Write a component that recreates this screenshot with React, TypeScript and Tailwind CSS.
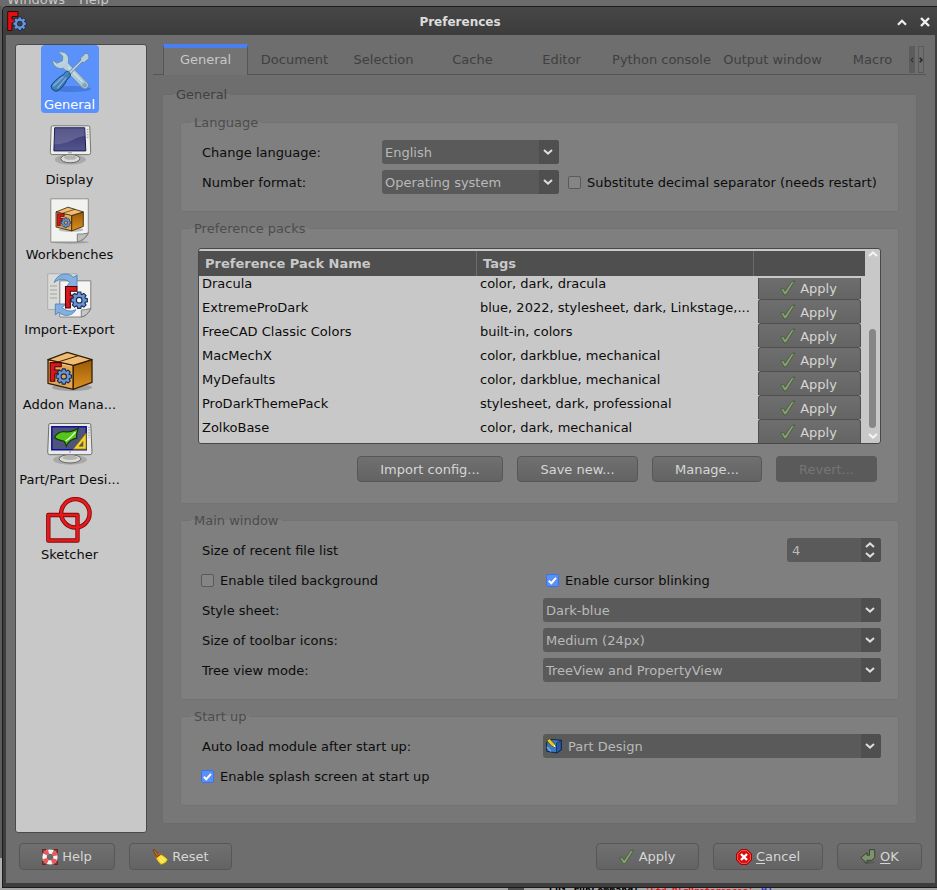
import React from "react";

const gearPath = (r: number) => {
  const pts: string[] = [];
  for (let i = 0; i < 8; i++) {
    const a = (i * Math.PI) / 4;
    [[-0.34, 0.76], [-0.19, 1], [0.19, 1], [0.34, 0.76]].forEach(([d, k]) => {
      pts.push(`${(Math.cos(a + d) * r * k).toFixed(2)},${(Math.sin(a + d) * r * k).toFixed(2)}`);
    });
  }
  return `M${pts.join("L")}Z`;
};

const Gear = ({ x, y, r, sw = 1 }: { x: number; y: number; r: number; sw?: number }) => (
  <g transform={`translate(${x} ${y})`}>
    <path
      d={`${gearPath(r)}M${r * 0.34},0A${r * 0.34},${r * 0.34} 0 1 0 ${-r * 0.34},0A${r * 0.34},${r * 0.34} 0 1 0 ${r * 0.34},0Z`}
      fill="#6a93cf"
      fillRule="evenodd"
      stroke="#142c54"
      strokeWidth={sw}
    />
  </g>
);

/* Block-shaped emblem, placed by its own corner and size. */
const Emblem = ({ x, y, w, h, sw = 1 }: { x: number; y: number; w: number; h: number; sw?: number }) => (
  <path
    transform={`translate(${x} ${y})`}
    d={`M0 0H${w}V${h * 0.22}H${w * 0.42}V${h * 0.4}H${w * 0.82}V${h * 0.6}H${w * 0.42}V${h}H0Z`}
    fill="#d8181c"
    stroke="#4a0508"
    strokeWidth={sw}
  />
);

const ToolsIcon = () => (
  <svg width="48" height="48" viewBox="0 0 48 48">
    <defs>
      <linearGradient id="wr" x1="0" y1="0" x2="1" y2="1">
        <stop offset="0" stopColor="#c3dbe4" />
        <stop offset="1" stopColor="#9fc0d2" />
      </linearGradient>
      <linearGradient id="hd" x1="0" y1="0" x2="1" y2="1">
        <stop offset="0" stopColor="#6ba6da" />
        <stop offset="1" stopColor="#1f5c9e" />
      </linearGradient>
    </defs>
    <ellipse cx="25" cy="42" rx="20" ry="3" fill="#2c5fb5" opacity=".45" />
    <path
      d="M12.5 5.2C18.5 3.6 23.3 8 22.5 13.5L22.4 16.2L41.8 36.2C43.8 38.5 41.5 42.2 38.2 41.7L36.2 40.7L17.5 21.2C11.8 22.8 6.6 18.8 6.2 12.8L10.8 16.2L16.4 13.8L16.8 9.2Z"
      fill="url(#wr)"
      stroke="#6c8fa9"
      strokeWidth="1"
    />
    <path d="M22 20L36.5 35" stroke="#d8e8ee" strokeWidth="1.4" opacity=".8" />
    <circle cx="38.6" cy="38.2" r="1.6" fill="#8cabc0" stroke="#6c8fa9" strokeWidth=".7" />
    <path d="M22 25.5L34.7 13.3L34.5 11L39.5 6.3L42.8 7L43 11.5L38.3 15.5L36 15.2L24 27.5Z" fill="#b5cddb" stroke="#5f86a5" strokeWidth=".9" />
    <path d="M20.5 24.2C22 23.6 25 26.8 24.3 28.5C23.7 30.5 21.8 31.2 20.5 33.5C19 37.5 14 43.3 10.5 44.2C8 44.2 5 41.5 5.2 39.2C6.3 36 12.5 30.5 15.5 28.8C18.5 27.5 18.7 25.4 20.5 24.2Z" fill="url(#hd)" stroke="#123f70" strokeWidth="1" />
    <path d="M8 38.5L17 30M11.5 41L20 31" stroke="#9cc6ea" strokeWidth="1.4" opacity=".65" strokeLinecap="round" />
  </svg>
);

const MonitorBase = ({ cx, cy, rx }: { cx: number; cy: number; rx: number }) => (
  <g>
    <ellipse cx={cx} cy={cy + 1} rx={rx + 6} ry="5" fill="#6f6f6f" opacity=".35" />
    <path d={`M${cx - 4} ${cy - 6}H${cx + 4}V${cy}H${cx - 4}Z`} fill="#8e8e8a" />
    <ellipse cx={cx} cy={cy} rx={rx} ry="4.2" fill="#dcdcd8" stroke="#666762" strokeWidth="1" />
    <ellipse cx={cx} cy={cy - 1} rx={rx - 3} ry="2.2" fill="#b4b5b0" />
  </g>
);

const DisplayIcon = () => (
  <svg width="48" height="48" viewBox="0 0 48 48">
    <defs>
      <linearGradient id="scr" x1="0" y1="0" x2="0" y2="1">
        <stop offset="0" stopColor="#33346e" />
        <stop offset="1" stopColor="#53558c" />
      </linearGradient>
    </defs>
    <MonitorBase cx={24.3} cy={36.6} rx={9.5} />
    <path d="M6.5 3.8H42.5Q43.7 3.8 43.8 5L44.7 30.5Q44.7 32.6 42.7 32.6H6.2Q4.3 32.6 4.3 30.5L5.2 5Q5.3 3.8 6.5 3.8Z" fill="#eeeeea" stroke="#767672" />
    <path d="M8.7 5.8H38.7L39.8 28.9H7.9Z" fill="url(#scr)" stroke="#17175a" />
    <path d="M9 6.2H38.4L38.8 14C29 14.5 25 22 8.5 22.5Z" fill="#8486ad" opacity=".45" />
    <path d="M41.6 7V17" stroke="#999" strokeWidth="1.6" strokeDasharray="1 1.6" />
    <path d="M22 30.8H26" stroke="#888" strokeWidth=".8" />
  </svg>
);

const CrateShape = ({ id }: { id: string }) => (
  <g strokeLinejoin="round">
    <defs>
      <linearGradient id={id} x1="0" y1="0" x2="0" y2="1">
        <stop offset="0" stopColor="#9a5a05" />
        <stop offset="1" stopColor="#dc9020" />
      </linearGradient>
    </defs>
    <ellipse cx="26" cy="40.5" rx="20" ry="3.5" fill="#555" opacity=".35" />
    <path d="M2 12.7L27.3 18.3V42.3L2 36.3Z" fill="#e4a550" stroke="#342003" strokeWidth="1.3" />
    <path d="M27.3 18.3L46 12.7V35.3L27.3 42.3Z" fill={`url(#${id})`} stroke="#342003" strokeWidth="1.3" />
    <path d="M2 12.7L21.3 5.3L46 12.7L27.3 18.3Z" fill="#f0bb73" stroke="#342003" strokeWidth="1.3" />
    <path d="M12 15L32.5 8.6" stroke="#342003" strokeWidth="1" />
    <path d="M3.2 14.3L26 19.4" stroke="#fbd7a3" strokeWidth=".7" />
    <Emblem x={4.2} y={15.6} w={11} h={18.6} sw={1.1} />
    <Gear x={17.8} y={29.5} r={7.8} sw={1.1} />
  </g>
);

const WorkbenchesIcon = () => (
  <svg width="48" height="48" viewBox="0 0 48 48">
    <ellipse cx="24" cy="45.3" rx="19" ry="1.5" fill="#666" opacity=".4" />
    <path d="M4.8 1.8H42.3V36.5Q38 44.5 31 45H4.8Z" fill="#f2f2f0" stroke="#90908c" />
    <path d="M31.3 45V37Q36 37.5 42.3 36Q38 43.5 31.3 45Z" fill="#c0c0bd" stroke="#777" strokeWidth=".9" />
    <g transform="translate(8.8 6.8) scale(.62 .64)">
      <CrateShape id="crSmall" />
    </g>
  </svg>
);

const ImportExportIcon = () => (
  <svg width="48" height="48" viewBox="0 0 48 48">
    <path d="M1.7 1.8H31V37.5H1.7Z" fill="#d9d9d7" stroke="#adadaa" />
    <path d="M4 14H11M4 18H11M4 22H11M4 26H11" stroke="#b5b5b2" strokeWidth="1.4" />
    <path d="M13.8 8.8H44.8V36.5Q41 44.5 35.5 45H13.8Z" fill="#f5f5f4" stroke="#81817e" />
    <path d="M35.3 45V38Q39 38 44.8 36.5Q41 44 35.3 45Z" fill="#c7c7c5" stroke="#777" strokeWidth=".9" />
    <path d="M8.2 10.5C11 1.2 22.5-.5 27.2 5.3L31 3.2V14.5H20.5L23.6 10.8C19.8 5.8 12.8 6.5 8.2 10.5Z" fill="#84b0de" stroke="#4e82bd" strokeWidth=".9" />
    <path d="M9.3 32H19.5L16.3 35.6C20 39.6 26 39.8 29.8 37.5C27 44.5 17 45.2 13 40.2L9.3 42.8Z" fill="#84b0de" stroke="#4e82bd" strokeWidth=".9" />
    <Emblem x={19.5} y={14.5} w={11.5} h={21.5} sw={1.1} />
    <Gear x={33.2} y={28.2} r={8.3} sw={1.1} />
  </svg>
);

const AddonIcon = () => (
  <svg width="48" height="48" viewBox="0 0 48 48">
    <CrateShape id="crBig" />
  </svg>
);

const PartIcon = () => (
  <svg width="48" height="48" viewBox="0 0 48 48">
    <MonitorBase cx={24} cy={36.8} rx={10.8} />
    <path d="M4 1.5H43.5Q44.6 1.5 44.8 3L46 30.5Q46 32.7 44 32.7H3.7Q1.7 32.7 1.7 30.5L2.8 3Q3 1.5 4 1.5Z" fill="#e9e9e5" stroke="#6e6e6a" />
    <path d="M5.8 4.7H40.2V27.7H5.8Z" fill="#50537c" stroke="#0a1199" strokeWidth="1.5" />
    <path d="M8.5 15.5C10 12 14 9.5 18 9.7C23 10.5 29 8.5 32.3 6C31.3 10 29.5 13 30.8 16.2C26 17 22 20 20.3 24.2C19.5 21.5 19.5 20.5 18 19.3C15 18 11 18.5 8.5 15.5Z" fill="#57c41b" stroke="#143c05" strokeWidth="1.2" />
    <path d="M19.5 19C23 17 27 13 29.5 10" stroke="#d9ffc4" strokeWidth="1.3" fill="none" />
    <path d="M40.2 11V27.2H27Z" fill="#efd32e" stroke="#75610c" strokeWidth=".8" />
    <path d="M37 19.5V24.3H33Z" fill="#50537c" stroke="#75610c" strokeWidth=".6" />
    <path d="M43 5V16" stroke="#999" strokeWidth="1.4" strokeDasharray="1 1.6" />
    <circle cx="24" cy="30" r=".9" fill="#aaa" />
  </svg>
);

const SketcherIcon = () => (
  <svg width="48" height="48" viewBox="0 0 48 48" fill="none">
    <path d="M2.3 18H31.5V43.5H2.3Z" stroke="#7e0a0d" strokeWidth="4.4" strokeLinejoin="round" />
    <circle cx="29.4" cy="16.3" r="14.2" stroke="#7e0a0d" strokeWidth="4.4" />
    <path d="M2.3 18H31.5V43.5H2.3Z" stroke="#e8191d" strokeWidth="2.7" strokeLinejoin="round" />
    <circle cx="29.4" cy="16.3" r="14.2" stroke="#e8191d" strokeWidth="2.7" />
  </svg>
);

const CheckIcon = () => (
  <svg width="16" height="16" viewBox="0 0 16 16" className="shrink-0">
    <path d="M.8 9L3 8.1L5.2 11.2L11.6 1.5L14.8 1L6.4 14.4L4.4 14.9Z" fill="#83a26c" stroke="#405538" strokeWidth=".8" strokeLinejoin="round" />
  </svg>
);

const HelpIcon = () => (
  <svg width="16" height="16" viewBox="0 0 16 16" className="shrink-0">
    <path d="M.7 4V.7H4M12 .7H15.3V4M15.3 12V15.3H12M4 15.3H.7V12" fill="none" stroke="#8c1616" strokeWidth="1.3" />
    <circle cx="8" cy="8" r="5.4" fill="none" stroke="#f4f4f4" strokeWidth="4.4" />
    <circle cx="8" cy="8" r="5.4" fill="none" stroke="#ef5555" strokeWidth="4.4" strokeDasharray="4.24 4.24" strokeDashoffset="-2.12" />
  </svg>
);

const BroomIcon = () => (
  <svg width="16" height="16" viewBox="0 0 16 16" className="shrink-0">
    <path d="M1 1L2.5.8L6.5 5.5L4.5 7Z" fill="#c77a14" stroke="#6f3c05" strokeWidth=".9" />
    <path d="M3.8 8L7.8 4.8C10 6 13 7.5 15.5 10.5C14.8 13 12 15 9 15.5C7 13.5 4.5 11 3.8 8Z" fill="#f5df38" stroke="#a98a05" strokeWidth=".8" />
    <path d="M4 8.6L8.6 5.2" stroke="#c02020" strokeWidth="1.3" />
    <path d="M7 9L11 14M9 7.6L13.5 12" stroke="#fff79a" strokeWidth="1" />
  </svg>
);

const CancelIcon = () => (
  <svg width="16" height="16" viewBox="0 0 16 16" className="shrink-0">
    <path d="M5 .5H11L15.5 5V11L11 15.5H5L.5 11V5Z" fill="#d90d0d" stroke="#a00" />
    <path d="M5.3 1.6H10.7L14.4 5.3V10.7L10.7 14.4H5.3L1.6 10.7V5.3Z" fill="none" stroke="#ee7070" strokeWidth=".8" />
    <path d="M5 5L11 11M11 5L5 11" stroke="#fff" strokeWidth="2.4" />
  </svg>
);

const EnterIcon = () => (
  <svg width="16" height="16" viewBox="0 0 16 16" className="shrink-0">
    <ellipse cx="9" cy="13.5" rx="6" ry="1.5" fill="#444" opacity=".35" />
    <path d="M9.5 .7H14.7V8.3L11.8 11.3H7V14.2L.8 8.8L7 3.6V6.2H9.5Z" fill="#7d936b" stroke="#33412b" strokeWidth=".9" strokeLinejoin="round" />
  </svg>
);

const PartDesignIcon = () => (
  <svg width="16" height="16" viewBox="0 0 16 16" className="shrink-0">
    <path d="M.7 4L5 1.5L15.3 2.2V12L10.5 15L.7 13.2Z" fill="#3a78c4" stroke="#0b1d38" strokeWidth=".9" />
    <path d="M10.5 5V15L15.3 12V2.2Z" fill="#2458a0" stroke="#0b1d38" strokeWidth=".6" />
    <path d="M1 9L5 13.5" stroke="#7cb0e8" strokeWidth="1.2" />
    <path d="M.8 2.7L3.4.6L8.8 6.2L9 9L6 8.4Z" fill="#e8cb1c" stroke="#3c3403" strokeWidth=".7" />
    <path d="M7.2 8.5L9.5 9.3L8.8 6.6Z" fill="#fff" />
  </svg>
);

const AppIcon = () => (
  <svg width="20" height="20" viewBox="0 0 20 20">
    <path d="M.7.5H11V5.5H5V8H9V12H5V19.5H.7Z" fill="#e01010" stroke="#3d0606" />
    <Gear x={12.8} y={12.7} r={7} sw={1} />
  </svg>
);

const Chevron = ({ up = false, color = "#dcdcdc" }: { up?: boolean; color?: string }) => (
  <svg width="10" height="6" viewBox="0 0 10 6" fill="none" className="shrink-0">
    <path d={up ? "M1 5L5 1.4L9 5" : "M1 1L5 4.6L9 1"} stroke={color} strokeWidth="2" />
  </svg>
);

const Label = ({ className, children }: { className: string; children: React.ReactNode }) => (
  <span className={`shrink-0 pt-[2px] whitespace-nowrap ${className}`}>{children}</span>
);

const Select = ({ className, icon, children }: { className: string; icon?: React.ReactNode; children: React.ReactNode }) => (
  <div className={`flex h-6 shrink-0 overflow-hidden rounded-[3px] bg-[#5a5a5a] text-[#b9b9b9] ${className}`}>
    <div className="flex flex-1 items-center gap-[6px] pl-[3px]">
      {icon}
      <span className="pt-[2px]">{children}</span>
    </div>
    <div className="flex w-5 items-center justify-center bg-[#4f4f4f] pr-[2px] pb-[1px]">
      <Chevron />
    </div>
  </div>
);

const CheckBox = ({ checked = false, className = "", children }: { checked?: boolean; className?: string; children: React.ReactNode }) => (
  <div className={`flex items-center gap-[6px] whitespace-nowrap ${className}`}>
    <span className={`flex size-[13px] items-center justify-center rounded-[2px] border ${checked ? "border-[#3c74e8] bg-[#5b8ff8]" : "border-[#5a5a5a] bg-[#858585]"}`}>
      {checked && (
        <svg width="9" height="9" viewBox="0 0 9 9" fill="none">
          <path d="M.8 4.8L3.3 7.2L8 1.8" stroke="#fff" strokeWidth="2" />
        </svg>
      )}
    </span>
    <span className="pt-[2px]">{children}</span>
  </div>
);

const Button = ({ className, children }: { className: string; children: React.ReactNode }) => (
  <button className={`flex shrink-0 items-center justify-center gap-1 rounded-[4px] border border-[#575757] bg-linear-to-b from-[#707070] to-[#636363] text-[#d6d6d6] ${className}`}>
    {children}
  </button>
);

const Group = ({ title, className, children }: { title: string; className: string; children: React.ReactNode }) => (
  <fieldset className={`w-[719px] min-w-0 shrink-0 rounded-[3px] border border-[#737373] bg-[#7f7f7f] pl-[10px] ${className}`}>
    <legend className="h-[17px] px-[3px] leading-[17px] text-[#4c4c4c]">{title}</legend>
    {children}
  </fieldset>
);

const categories = [
  { name: "General", icon: <ToolsIcon /> },
  { name: "Display", icon: <DisplayIcon /> },
  { name: "Workbenches", icon: <WorkbenchesIcon /> },
  { name: "Import-Export", icon: <ImportExportIcon /> },
  { name: "Addon Mana...", icon: <AddonIcon /> },
  { name: "Part/Part Desi...", icon: <PartIcon /> },
  { name: "Sketcher", icon: <SketcherIcon /> },
];

const packs = [
  ["Dracula", "color, dark, dracula"],
  ["ExtremeProDark", "blue, 2022, stylesheet, dark, Linkstage,..."],
  ["FreeCAD Classic Colors", "built-in, colors"],
  ["MacMechX", "color, darkblue, mechanical"],
  ["MyDefaults", "color, darkblue, mechanical"],
  ["ProDarkThemePack", "stylesheet, dark, professional"],
  ["ZolkoBase", "color, dark, mechanical"],
];

const tabs = [
  ["Document", "w-[89px]"],
  ["Selection", "w-[89px]"],
  ["Cache", "w-[89px]"],
  ["Editor", "w-[89px]"],
  ["Python console", "w-[111px]"],
  ["Output window", "w-[111px]"],
  ["Macro", "w-[81px] pl-2"],
];

const Sidebar = () => (
  <div className="h-[789px] w-[132px] shrink-0 rounded-[3px] border border-[#4a4a4a] bg-[#c8c8c8]">
    <div className="flex w-[108px] flex-col items-center gap-[7px]">
      {categories.map((c, i) => (
        <div key={c.name} className={`flex h-[68px] min-w-[58px] flex-col items-center rounded-[4px] pt-[2px] ${i === 0 ? "bg-[#5b91fb] text-white" : "text-[#0c0c0c]"}`}>
          {c.icon}
          <span className="mt-px h-[17px] pr-px leading-[18px] whitespace-nowrap">{c.name}</span>
        </div>
      ))}
    </div>
  </div>
);

const TabBar = () => (
  <div className="flex h-[31px] w-[773px] text-[#3f3f3f]">
    <div className="w-[10px] border-b border-[#555]" />
    <div className="flex w-[85px] items-center justify-center border-x border-t-4 border-x-[#555] border-t-[#4a7ff0] bg-[#737373] pb-[4px] text-[#c8c8c8]">General</div>
    <div className="flex flex-1 border-b border-[#555] pl-[2px]">
      {tabs.map(([t, w]) => (
        <div key={t} className={`flex shrink-0 items-center justify-center pt-[2px] whitespace-nowrap ${w}`}>{t}</div>
      ))}
      <div className="mt-[2px] flex h-[27px] gap-[3px]">
        <div className="flex w-[6px] items-center justify-center bg-[#5c5c5c]">
          <svg width="4" height="6" viewBox="0 0 4 6" fill="none"><path d="M3.3 .8L1 3L3.3 5.2" stroke="#3a3a3a" strokeWidth="1.3" /></svg>
        </div>
        <div className="flex w-[6px] items-center justify-center border border-[#5a5a5a]">
          <svg width="4" height="6" viewBox="0 0 4 6" fill="none" className="shrink-0"><path d="M.7 .8L3 3L.7 5.2" stroke="#222" strokeWidth="1.5" /></svg>
        </div>
      </div>
    </div>
  </div>
);

const PackTable = () => (
  <div className="ml-[7px] flex h-[196px] w-[683px] overflow-hidden rounded-[3px] border border-[#484848] bg-[#c8c8c8] pt-[2px]">
    <div className="flex w-[666px] flex-col">
      <div className="flex h-[25px] shrink-0 items-center bg-[#4f4f4f] font-bold text-[#c8c8c8]">
        <div className="flex h-full w-[278px] items-center border-r border-[#6b6b6b] pl-[6px]">Preference Pack Name</div>
        <div className="flex h-full w-[277px] items-center border-r border-[#6b6b6b] pl-[6px]">Tags</div>
      </div>
      <div className="flex h-[167px] overflow-hidden text-[#0c0c0c]">
        <div className="-mt-[4px] w-[278px] pl-[3px]">
          {packs.map((p) => <div key={p[0]} className="h-6 leading-[24px]">{p[0]}</div>)}
        </div>
        <div className="-mt-[4px] w-[281px] pl-[3px]">
          {packs.map((p) => <div key={p[0]} className="h-6 leading-[24px] whitespace-nowrap">{p[1]}</div>)}
        </div>
        <div className="mt-[2px] w-[103px] overflow-hidden">
          <div className="-mt-[3px]">
            {packs.map((p) => (
              <button key={p[0]} className="flex h-6 w-full items-center justify-center gap-1 rounded-t-[3px] border-x border-t border-[#4f4f4f] bg-linear-to-b from-[#6f6f6f] to-[#646464] pr-[2px] text-[#d6d6d6]">
                <CheckIcon />
                <span className="pt-[2px]">Apply</span>
              </button>
            ))}
            <div className="h-px bg-[#646464]" />
          </div>
        </div>
      </div>
    </div>
    <div className="flex flex-1 flex-col items-center pb-[4px]">
      <Chevron up color="#f4f4f4" />
      <div className="mt-[72px] h-[99px] w-[7px] rounded-full bg-[#868686]" />
      <div className="mt-auto flex"><Chevron color="#f4f4f4" /></div>
    </div>
  </div>
);

const GeneralPage = () => (
  <fieldset className="mt-[11px] ml-[9px] flex h-[738px] w-[755px] min-w-0 flex-col rounded-[3px] border border-[#6b6b6b] bg-[#777777] pl-[10px]">
    <legend className="h-[17px] px-[3px] leading-[17px] text-[#404040]">General</legend>
    <div className="-ml-px flex flex-col gap-2 pt-[11px] pl-2">
      <Group title="Language" className="h-[98px] text-[#0c0c0c]">
        <div className="flex flex-col gap-[6px] pt-[9px] pl-[11px]">
          <div className="flex items-center">
            <Label className="w-[180px]">Change language:</Label>
            <Select className="w-[177px]">English</Select>
          </div>
          <div className="flex items-center">
            <Label className="w-[180px]">Number format:</Label>
            <Select className="w-[177px]">Operating system</Select>
            <CheckBox className="ml-[9px]">Substitute decimal separator (needs restart)</CheckBox>
          </div>
        </div>
      </Group>
      <Group title="Preference packs" className="h-[284px]">
        <div className="pt-[11px]">
          <PackTable />
          <div className="mt-3 flex gap-[14px] pl-[166px]">
            <Button className="h-[26px] w-[146px] pt-[2px]">Import config...</Button>
            <Button className="h-[26px] w-[121px] pt-[2px]">Save new...</Button>
            <Button className="h-[26px] w-[110px] pt-[2px]">Manage...</Button>
            <div className="flex h-[26px] w-[101px] items-center justify-center rounded-[4px] bg-[#5a5a5a] pt-[2px] text-[#757575]">Revert...</div>
          </div>
        </div>
      </Group>
      <Group title="Main window" className="h-[188px] text-[#0c0c0c]">
        <div className="flex flex-col gap-[6px] pt-[9px] pl-[11px]">
          <div className="flex items-center">
            <Label className="w-[585px]">Size of recent file list</Label>
            <div className="flex h-6 w-[94px] overflow-hidden rounded-[3px] bg-[#5a5a5a] text-[#b9b9b9]">
              <div className="flex flex-1 items-center pt-[2px] pl-[5px]">4</div>
              <div className="flex w-5 flex-col items-center justify-center gap-1 bg-[#4f4f4f] pr-[2px]">
                <Chevron up />
                <Chevron />
              </div>
            </div>
          </div>
          <div className="-ml-px flex h-6 items-center">
            <CheckBox className="w-[345px]">Enable tiled background</CheckBox>
            <CheckBox checked>Enable cursor blinking</CheckBox>
          </div>
          <div className="flex items-center">
            <Label className="w-[341px]">Style sheet:</Label>
            <Select className="w-[338px]">Dark-blue</Select>
          </div>
          <div className="flex items-center">
            <Label className="w-[341px]">Size of toolbar icons:</Label>
            <Select className="w-[338px]">Medium (24px)</Select>
          </div>
          <div className="flex items-center">
            <Label className="w-[341px]">Tree view mode:</Label>
            <Select className="w-[338px]">TreeView and PropertyView</Select>
          </div>
        </div>
      </Group>
      <Group title="Start up" className="h-[98px] text-[#0c0c0c]">
        <div className="flex flex-col gap-[6px] pt-[9px] pl-[11px]">
          <div className="flex items-center">
            <Label className="w-[341px]">Auto load module after start up:</Label>
            <Select className="w-[338px]" icon={<PartDesignIcon />}>Part Design</Select>
          </div>
          <CheckBox checked className="-ml-px h-6">Enable splash screen at start up</CheckBox>
        </div>
      </Group>
    </div>
  </fieldset>
);

export default function App() {
  return (
    <div className="flex h-[890px] w-[937px] flex-col overflow-hidden bg-[#6b6b6b] font-['DejaVu_Sans',sans-serif] text-[13px] leading-[16px]">
      <div className="flex h-[6px] shrink-0 overflow-hidden pl-[7px] text-[#c8c8c8]">
        <span className="-mt-[8px] w-[72px]">Windows</span>
        <span className="-mt-[8px]">Help</span>
      </div>
      <div className="flex h-[882px] shrink-0">
        <div className="flex w-[2px] shrink-0 flex-col">
          <div className="h-[852px] bg-[#5c5c5c]" />
          <div className="flex-1 bg-[#b0b0b0]" />
        </div>
        <div className="flex w-[935px] flex-col rounded-tl-[5px] border-y border-l border-[#1c1c1c] bg-[#3e3e3e] pr-[2px] pb-[4px] pl-[3px]">
          <div className="-mr-[2px] -ml-[3px] flex h-7 shrink-0 items-center rounded-tl-[4px] bg-linear-to-b from-[#474747] to-[#3c3c3c] pl-[4px]">
            <AppIcon />
            <div className="flex-1 pt-[2px] pr-[4px] text-center text-[12px] font-bold text-[#dcdcdc]">Preferences</div>
            <svg width="10" height="7" viewBox="0 0 10 7" fill="none" className="mt-[2px]"><path d="M1 5.8L5 1.8L9 5.8" stroke="#f0f0f0" strokeWidth="2.2" /></svg>
            <svg width="10" height="10" viewBox="0 0 10 10" fill="none" className="mt-px mr-[7px] ml-[13px]"><path d="M1 1L9 9M9 1L1 9" stroke="#f0f0f0" strokeWidth="2.4" /></svg>
          </div>
          <div className="flex h-[848px] flex-col bg-[#6e6e6e] pt-[9px] pl-[9px]">
            <div className="flex gap-[6px]">
              <Sidebar />
              <div>
                <TabBar />
                <GeneralPage />
              </div>
            </div>
            <div className="mt-[10px] flex pl-1">
              <Button className="h-[27px] w-[96px]"><HelpIcon />Help</Button>
              <Button className="ml-[14px] h-[27px] w-[103px]"><BroomIcon />Reset</Button>
              <Button className="ml-[364px] h-[27px] w-[103px] pr-px"><CheckIcon />Apply</Button>
              <Button className="ml-[14px] h-[27px] w-[110px]"><CancelIcon /><span><u className="underline-offset-2">C</u>ancel</span></Button>
              <Button className="ml-[14px] h-[27px] w-[85px]"><EnterIcon /><span><u className="underline-offset-2">O</u>K</span></Button>
            </div>
          </div>
        </div>
      </div>
      <div className="flex h-[2px] shrink-0 overflow-hidden bg-[#a6a6a6]">
        <div className="ml-[508px] h-full w-[16px] bg-[#505050]" />
        <div className="ml-[25px] flex font-['DejaVu_Sans_Mono',monospace] text-[10px] leading-[12px] font-bold">
          <span className="-mt-[3px] w-[96px] text-black">Gui.runCommand(</span>
          <span className="-mt-[3px] w-[110px] text-[9px] text-[#f01010]">'Std_DlgPreferences'</span>
          <span className="-mt-[3px] text-[#3030e0]">,0)</span>
        </div>
      </div>
    </div>
  );
}
